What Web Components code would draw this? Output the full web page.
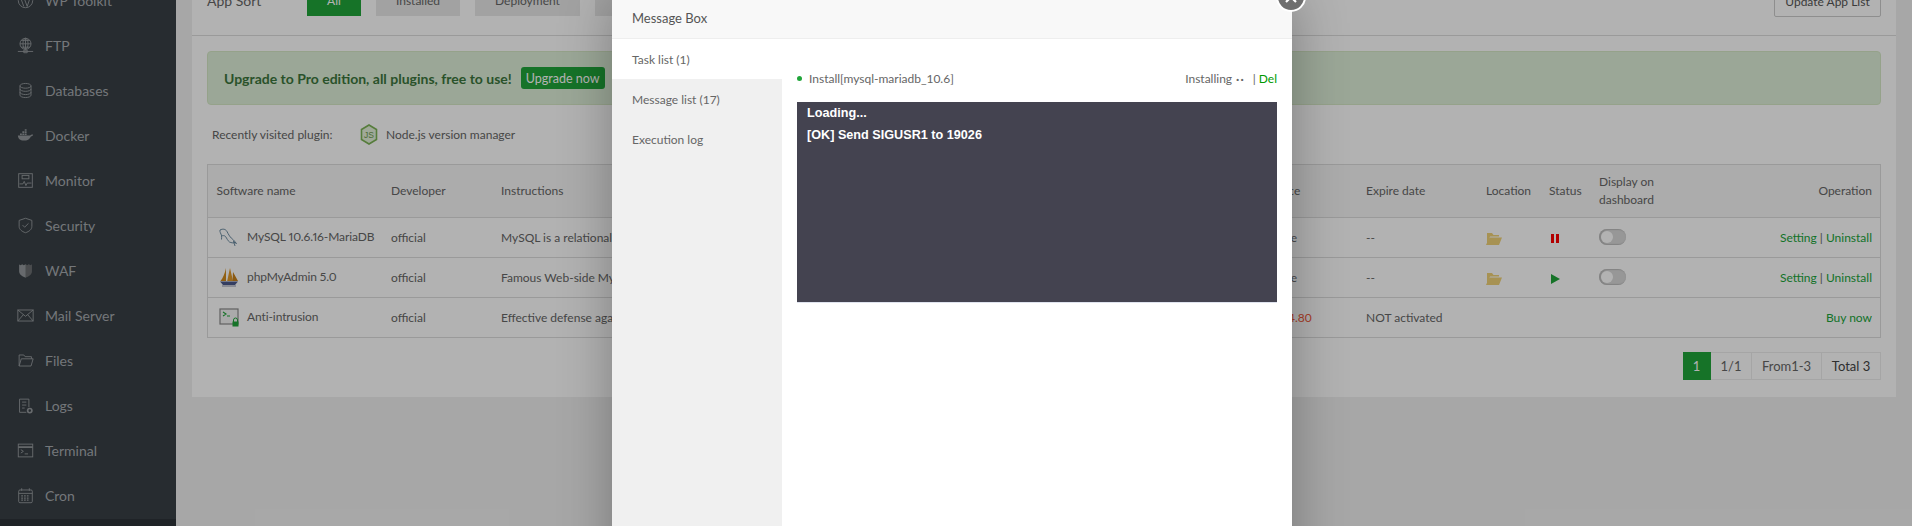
<!DOCTYPE html>
<html>
<head>
<meta charset="utf-8">
<title>App Store</title>
<style>
    html, body { margin: 0; height: 100%; overflow: hidden; }
    body { background: #f0f0f0; font: 12px Lato, "Open Sans", "Liberation Sans", sans-serif; color: #666; }
</style>
</head>
<body>
<bt-app>
    <bt-sidebar slot="side">
        <bt-nav-item icon="wp">WP Toolkit</bt-nav-item>
        <bt-nav-item icon="ftp">FTP</bt-nav-item>
        <bt-nav-item icon="db">Databases</bt-nav-item>
        <bt-nav-item icon="docker">Docker</bt-nav-item>
        <bt-nav-item icon="monitor">Monitor</bt-nav-item>
        <bt-nav-item icon="security">Security</bt-nav-item>
        <bt-nav-item icon="waf">WAF</bt-nav-item>
        <bt-nav-item icon="mail">Mail Server</bt-nav-item>
        <bt-nav-item icon="files">Files</bt-nav-item>
        <bt-nav-item icon="logs">Logs</bt-nav-item>
        <bt-nav-item icon="terminal">Terminal</bt-nav-item>
        <bt-nav-item icon="cron">Cron</bt-nav-item>
    </bt-sidebar>
    <bt-soft-panel slot="main"></bt-soft-panel>
    <bt-message-box slot="dialog"></bt-message-box>
</bt-app>

<script>
const NAV_ICONS = {
    wp: `<circle cx="10" cy="10" r="8.5"/><path d="M4 6l4 11M8 6l4 11 3-9M6 6h5M13 6h3"/>`,
    ftp: `<circle cx="10" cy="8" r="6.5"/><path d="M3.5 8h13M10 1.5v13M5 4h10M5 12h10"/><ellipse cx="10" cy="8" rx="3" ry="6.5"/><path d="M1 17h18M8 15.5h4v3H8z"/>`,
    db: `<ellipse cx="10" cy="4.5" rx="6.5" ry="2.8"/><path d="M3.5 4.5v11c0 1.6 3 2.8 6.5 2.8s6.5-1.2 6.5-2.8v-11M3.5 8.200c0 1.600 3 2.800 6.500 2.800s6.500-1.200 6.500-2.800M3.500 12c0 1.600 3 2.800 6.500 2.800s6.500-1.200 6.500-2.800"/>`,
    docker: `<g stroke="none" fill="currentColor"><path d="M1 10h14.500c.8-1.200 2.500-1.400 3.500-.8-.5 1.300-1.500 1.900-2.600 1.900C15 14.500 12 16 8 16c-4.500 0-6.700-2.500-7-6z"/><path d="M3.500 7.500h2.200v2H3.500zM6.300 7.500h2.200v2H6.300zM9.100 7.500h2.200v2H9.100zM6.300 5h2.200v2H6.300zM9.100 5h2.200v2H9.100zM9.100 2.500h2.200v2H9.100z"/></g>`,
    monitor: `<rect x="2" y="2" width="16" height="16"/><rect x="6" y="4" width="8" height="4"/><path d="M3 14h4l1.500-3 2 5 1.500-3h5"/>`,
    security: `<path d="M10 1.500l7.500 2.500v7c0 3.500-3 6-7.500 7.500C5.500 17 2.500 14.500 2.500 11V4z"/><path d="M6.500 9.500l2.500 2.500 4.500-4.500"/>`,
    waf: `<path stroke="none" fill="currentColor" d="M2.500 3l2 .8L6 2.500l2 1.300L10 2.500l2 1.300 2-1.300 1.500 1.300 2-.8v8c0 3.500-3 6-7.500 7.500C5.500 17 2.500 14.500 2.500 11z"/><path stroke="none" fill="#000" fill-opacity=".28" d="M10 2.500l2 1.300 2-1.300 1.500 1.300 2-.8v8c0 3.500-3 6-7.500 7.500z"/>`,
    mail: `<rect x="1" y="3.500" width="18" height="13"/><path d="M1 3.500l9 7.500 9-7.500M1 16.500l6.500-7.500M19 16.500L12.500 9"/>`,
    files: `<path d="M2.500 16.500V3.500h5.500l1.500 2H17v2.500M2.500 16.500l2.500-8.500h14l-2.500 8.500z"/>`,
    logs: `<path d="M14 12V2.500H3v15.500h8"/><path d="M6 6h5M6 9.500h5M6 13h3"/><circle cx="15" cy="16" r="2.500" stroke-width="2"/>`,
    terminal: `<rect x="1.500" y="2.500" width="17" height="15"/><path d="M1.500 6h17" stroke-width="2"/><path d="M4.500 9l3 2-3 2M9 14h4"/>`,
    cron: `<rect x="2" y="3.500" width="16" height="15" rx="1.500"/><path d="M2 7.500h16M5.500 1.500v3M14.500 1.500v3"/><path d="M5 10.500h10M5 13h10M5 15.500h10" stroke-dasharray="2 1.300" stroke-width="1.500"/>`
};

class BtNavItem extends HTMLElement {
    constructor() {
        super();
        this.attachShadow({ mode: 'open' });
    }

    connectedCallback() {
        this.shadowRoot.innerHTML = `
            <style>
                :host {
                    display: flex;
                    align-items: center;
                    box-sizing: border-box;
                    height: 45px;
                    padding: 0 0 2px 17px;
                    gap: 11px;
                    color: #a6abaf;
                    font-size: 14px;
                }
                svg {
                    width: 17px;
                    height: 17px;
                    flex: none;
                    color: #94999c;
                    fill: none;
                    stroke: currentColor;
                    stroke-width: 1.1;
                }
            </style>
            <svg viewBox="0 0 20 20">${NAV_ICONS[this.getAttribute('icon')]}</svg>
            <slot></slot>
        `;
    }
}

class BtSidebar extends HTMLElement {
    constructor() {
        super();
        this.attachShadow({ mode: 'open' });
        this.shadowRoot.innerHTML = `
            <style>
                :host {
                    display: block;
                    width: 176px;
                    height: 100%;
                    flex: none;
                    background: #383f45;
                    overflow: hidden;
                }
                .list { margin-top: -21px; }
                .tail { height: 40px; background: #2d3338; }
            </style>
            <div class="list"><slot></slot></div>
            <div class="tail"></div>
        `;
    }
}

class BtApp extends HTMLElement {
    constructor() {
        super();
        this.attachShadow({ mode: 'open' });
        this.shadowRoot.innerHTML = `
            <style>
                :host {
                    display: flex;
                    position: relative;
                    height: 526px;
                    overflow: hidden;
                }
                .main { flex: 1; padding: 0 16px; min-width: 0; }
                .shade {
                    position: absolute;
                    inset: 0;
                    background: rgba(0, 0, 0, 0.3);
                }
            </style>
            <slot name="side"></slot>
            <div class="main"><slot name="main"></slot></div>
            <div class="shade"></div>
            <slot name="dialog"></slot>
        `;
    }
}

class BtSoftPanel extends HTMLElement {
    constructor() {
        super();
        this.attachShadow({ mode: 'open' });
        this.shadowRoot.innerHTML = `
            <style>
                :host {
                    display: block;
                    background: #fff;
                    margin-top: -20px;
                    height: 417px;
                    color: #666;
                }
                .sort {
                    display: flex;
                    align-items: flex-start;
                    height: 56px;
                    padding: 6px 15px 0;
                    box-sizing: border-box;
                    border-bottom: 1px solid #ddd;
                }
                .sort .label { font-size: 14px; line-height: 30px; width: 100px; }
                .tab {
                    height: 30px;
                    line-height: 30px;
                    padding: 0 15px;
                    margin-right: 15px;
                    background: #e8e8e8;
                    font-size: 12px;
                    color: #666;
                    box-sizing: border-box;
                    text-align: center;
                }
                .tab.on { background: #20a53a; color: #fff; width: 54px; }
                .update {
                    margin-left: auto;
                    height: 31px;
                    width: 107px;
                    line-height: 29px;
                    text-align: center;
                    font-size: 12px;
                    border: 1px solid #ccc;
                    border-radius: 2px;
                    box-sizing: border-box;
                    color: #555;
                    background: #fff;
                }
                .body { padding: 15px 15px 0; }
                .alert {
                    display: flex;
                    align-items: center;
                    gap: 9px;
                    height: 54px;
                    box-sizing: border-box;
                    padding: 0 16px;
                    border: 1px solid #d6e9c6;
                    border-radius: 4px;
                    background: #dff0d8;
                    color: #3c763d;
                    font-weight: 700;
                    font-size: 14px;
                }
                .alert button {
                    height: 22px;
                    width: 84px;
                    padding: 0;
                    border: 0;
                    border-radius: 3px;
                    background: #20a53a;
                    color: #fff;
                    font: 400 12.5px Lato, sans-serif;
                }
                .recent {
                    display: flex;
                    align-items: center;
                    height: 59px;
                    padding-left: 5px;
                }
                .recent .title { width: 148px; }
                .recent svg { width: 18px; height: 21px; margin-right: 8px; }
                .pager { display: flex; justify-content: flex-end; margin-top: 14px; }
            </style>
            <div class="sort">
                <span class="label">App Sort</span>
                <span class="tab on">All</span>
                <span class="tab" style="width:84px">Installed</span>
                <span class="tab" style="width:105px">Deployment</span>
                <span class="tab" style="width:60px"></span>
                <span class="update">Update App List</span>
            </div>
            <div class="body">
                <div class="alert">
                    <span>Upgrade to Pro edition, all plugins, free to use!</span>
                    <button>Upgrade now</button>
                </div>
                <div class="recent">
                    <span class="title">Recently visited plugin:</span>
                    <svg viewBox="0 0 18 21">
                        <path d="M9 1l7.500 4.500v10L9 20l-7.500-4.500v-10z" fill="#e6f2dc" stroke="#7cb356" stroke-width="1.600"/>
                        <text x="9" y="14" text-anchor="middle" font-size="8.500" font-family="Liberation Sans" fill="#6c9a4c">JS</text>
                    </svg>
                    <span>Node.js version manager</span>
                </div>
                <bt-soft-table></bt-soft-table>
                <div class="pager"><bt-pager></bt-pager></div>
            </div>
        `;
    }
}

const SOFT_ROWS = [
    {
        name: 'MySQL 10.6.16-MariaDB',
        logo: `<path d="M1 3c3-1.500 5.500-1 7 1.500 1.500 3 3 6 6.500 8.500l3 3.500-3-1.500M1 3c-.5 2 1 3.500 1.500 5.500.3 1.500 0 2.500 0 4M2.500 8.500c1.500.5 2.500-.5 4 1 1.500 2 2 4 4 5.500 2 1 3.500.8 4.500 1M14.500 14l1.500 5" fill="none" stroke="#5d7f96" stroke-width=".9"/>`,
        desc: 'MySQL is a relational database',
        price: 'Free',
        expire: '--',
        status: 'stop',
        ops: ['Setting', 'Uninstall']
    },
    {
        name: 'phpMyAdmin 5.0',
        logo: `<path d="M7 1C6 6 4 11 1.500 14H7z" fill="#d08a1c"/><path d="M11 1c-1 4-1.800 9-2.800 13H14z" fill="#e09a2a"/><path d="M14 5c0 3-.5 6-.5 9H19z" fill="#c8811a"/><path d="M1 14.500h18l-3 3.500H4z" fill="#4d5a8c"/><path d="M3 19h14" stroke="#8a90a8" stroke-width="1"/>`,
        desc: 'Famous Web-side MySQL manager',
        price: 'Free',
        expire: '--',
        status: 'run',
        ops: ['Setting', 'Uninstall']
    },
    {
        name: 'Anti-intrusion',
        logo: `<rect x="1" y="2" width="18" height="15" fill="#f4f4f4" stroke="#8a8a8a" stroke-width="1.200"/><path d="M4 5l3 2-3 2M8 9h3" fill="none" stroke="#20a53a" stroke-width="1.100"/><path d="M14.500 15v-2a2 2 0 0 1 4 0v2" fill="none" stroke="#20a53a"/><rect x="13.500" y="14.500" width="6" height="5" fill="#20a53a"/>`,
        desc: 'Effective defense against intrusion',
        price: '$14.80',
        expire: 'NOT activated',
        status: '',
        ops: ['Buy now']
    }
];

class BtSoftTable extends HTMLElement {
    constructor() {
        super();
        this.attachShadow({ mode: 'open' });
        const rows = SOFT_ROWS.map(row => `
            <tr>
                <td class="first"><span class="name"><svg viewBox="0 0 20 20">${row.logo}</svg>${row.name}</span></td>
                <td>official</td>
                <td class="cut">${row.desc}</td>
                <td class="${row.price === 'Free' ? '' : 'price'}">${row.price}</td>
                <td>${row.expire}</td>
                ${row.status ? `
                <td><svg class="folder" viewBox="0 0 16 13"><path d="M1 13V1h5l1.500 2H13v1.500H4z" fill="#f0d277"/><path d="M0 13L3.500 5.500H16L13 13z" fill="#f0d277"/></svg></td>
                <td>${row.status === 'stop'
                    ? '<span class="pause"></span>'
                    : '<span class="play"></span>'}</td>
                <td><bt-switch></bt-switch></td>
                ` : '<td></td><td></td><td></td>'}
                <td class="ops">${row.ops.map(op => `<a>${op}</a>`).join(' | ')}</td>
            </tr>
        `).join('');
        this.shadowRoot.innerHTML = `
            <style>
                :host { display: block; }
                table {
                    width: 100%;
                    table-layout: fixed;
                    border-collapse: collapse;
                    border: 1px solid #ddd;
                    font-size: 12px;
                }
                th, td {
                    padding: 0 8.500px;
                    text-align: left;
                    font-weight: 400;
                    white-space: nowrap;
                    border-bottom: 1px solid #ddd;
                }
                th { height: 52px; background: #f6f6f6; white-space: normal; line-height: 18px; }
                td { height: 39px; }
                .cut { overflow: hidden; }
                .name { display: flex; align-items: center; gap: 8px; margin-top: -2px; letter-spacing: -0.1px; font-variant-numeric: proportional-nums; }
                .name svg { width: 20px; height: 20px; flex: none; }
                td.first { padding-left: 11px; }
                .ops, th:last-child { text-align: right; padding-right: 8px; }
                a { color: #20a53a; }
                .price { color: #f0593a; }
                .folder { width: 16px; height: 13px; display: block; margin-top: 2px; }
                .pause {
                    display: block;
                    width: 2px;
                    height: 9px;
                    margin: 2px 0 0 2px;
                    border-left: 3px solid #f00;
                    border-right: 3px solid #f00;
                }
                .play {
                    display: block;
                    width: 0;
                    height: 0;
                    margin: 2px 0 0 2px;
                    border-left: 9px solid #20a53a;
                    border-top: 5.500px solid transparent;
                    border-bottom: 5.500px solid transparent;
                }
            </style>
            <table>
                <colgroup>
                    <col style="width:175px"><col style="width:110px"><col style="width:773px"><col style="width:92px">
                    <col style="width:120px"><col style="width:63px"><col style="width:50px"><col style="width:100px"><col>
                </colgroup>
                <tr>
                    <th>Software name</th><th>Developer</th><th>Instructions</th><th>Price</th><th>Expire date</th>
                    <th>Location</th><th>Status</th><th>Display on dashboard</th><th>Operation</th>
                </tr>
                ${rows}
            </table>
        `;
    }
}

class BtSwitch extends HTMLElement {
    constructor() {
        super();
        this.attachShadow({ mode: 'open' });
        this.shadowRoot.innerHTML = `
            <style>
                :host {
                    display: block;
                    box-sizing: border-box;
                    width: 27px;
                    height: 16px;
                    margin-top: -2px;
                    border-radius: 9px;
                    background: #d8d8d8;
                    box-shadow: inset 1px 0 1px 1px #bbb;
                    padding: 2px;
                }
                i {
                    display: block;
                    width: 12px;
                    height: 12px;
                    border-radius: 50%;
                    background: #fff;
                }
            </style>
            <i></i>
        `;
    }
}

class BtPager extends HTMLElement {
    constructor() {
        super();
        this.attachShadow({ mode: 'open' });
        this.shadowRoot.innerHTML = `
            <style>
                :host { display: flex; font-size: 13px; }
                span {
                    height: 28px;
                    line-height: 26px;
                    box-sizing: border-box;
                    border: 1px solid #ececec;
                    border-left: 0;
                    text-align: center;
                    color: #666;
                }
                .on { background: #20a53a; color: #fff; border-color: #20a53a; width: 28px; }
                .last { color: #444; }
            </style>
            <span class="on">1</span>
            <span style="width:41px">1/1</span>
            <span style="width:70px">From1-3</span>
            <span class="last" style="width:59px">Total 3</span>
        `;
    }
}

class BtMessageBox extends HTMLElement {
    constructor() {
        super();
        this.attachShadow({ mode: 'open' });
        this.shadowRoot.innerHTML = `
            <style>
                :host {
                    position: absolute;
                    left: 612px;
                    top: -3px;
                    width: 680px;
                    height: 640px;
                    display: flex;
                    flex-direction: column;
                    background: #fff;
                    color: #666;
                    box-shadow: 1px 1px 50px rgba(0, 0, 0, 0.3);
                    font-size: 12px;
                }
                .title {
                    height: 42px;
                    box-sizing: border-box;
                    line-height: 42px;
                    padding-left: 20px;
                    font-size: 13px;
                    background: #f8f8f8;
                    border-bottom: 1px solid #eee;
                    color: #555;
                }
                .close {
                    position: absolute;
                    right: -14px;
                    top: -15px;
                    width: 30px;
                    height: 30px;
                    box-sizing: border-box;
                    border: 2px solid #fff;
                    border-radius: 50%;
                    background: #6f6f6f;
                }
                .close svg { display: block; width: 26px; height: 26px; }
                .cols { flex: 1; display: flex; }
                .tabs { width: 170px; flex: none; background: #f0f0f0; }
                .tabs div { height: 40px; line-height: 42px; padding-left: 20px; color: #666; }
                .tabs .on { background: #fff; }
                .content { flex: 1; padding: 19px 15px 0; }
                .task {
                    display: flex;
                    align-items: center;
                    height: 44px;
                    padding-bottom: 3px;
                    box-sizing: border-box;
                    color: #666;
                }
                .dot { width: 5px; height: 5px; border-radius: 50%; background: #20a53a; margin: 0 7px 0 0; }
                .state { margin-left: auto; }
                .dots { margin-left: 4px; font-weight: 700; letter-spacing: 1px; }
                .sep { margin-left: 8px; }
                .sep a { color: #090; }
                .log {
                    box-sizing: border-box;
                    height: 201px;
                    padding: 0 10px;
                    background: #444350;
                    color: #fff;
                    font: 700 12.65px/22px "Liberation Sans", sans-serif;
                    border-bottom: 1px solid #dfe3ee;
                }
            </style>
            <div class="title">Message Box</div>
            <div class="close"><svg viewBox="0 0 26 26"><path d="M8 8l10 10M18 8L8 18" stroke="#fff" stroke-width="2.200"/></svg></div>
            <div class="cols">
                <div class="tabs">
                    <div class="on">Task list (1)</div>
                    <div>Message list (17)</div>
                    <div>Execution log</div>
                </div>
                <div class="content">
                    <div class="task">
                        <span class="dot"></span>
                        <span>Install[mysql-mariadb_10.6]</span>
                        <span class="state">Installing<span class="dots">··</span></span>
                        <span class="sep">| <a>Del</a></span>
                    </div>
                    <div class="log">
                        <div>Loading...</div>
                        <div>[OK] Send SIGUSR1 to 19026</div>
                    </div>
                </div>
            </div>
        `;
    }
}

customElements.define('bt-nav-item', BtNavItem);
customElements.define('bt-sidebar', BtSidebar);
customElements.define('bt-switch', BtSwitch);
customElements.define('bt-pager', BtPager);
customElements.define('bt-soft-table', BtSoftTable);
customElements.define('bt-soft-panel', BtSoftPanel);
customElements.define('bt-message-box', BtMessageBox);
customElements.define('bt-app', BtApp);
</script>
</body>
</html>
